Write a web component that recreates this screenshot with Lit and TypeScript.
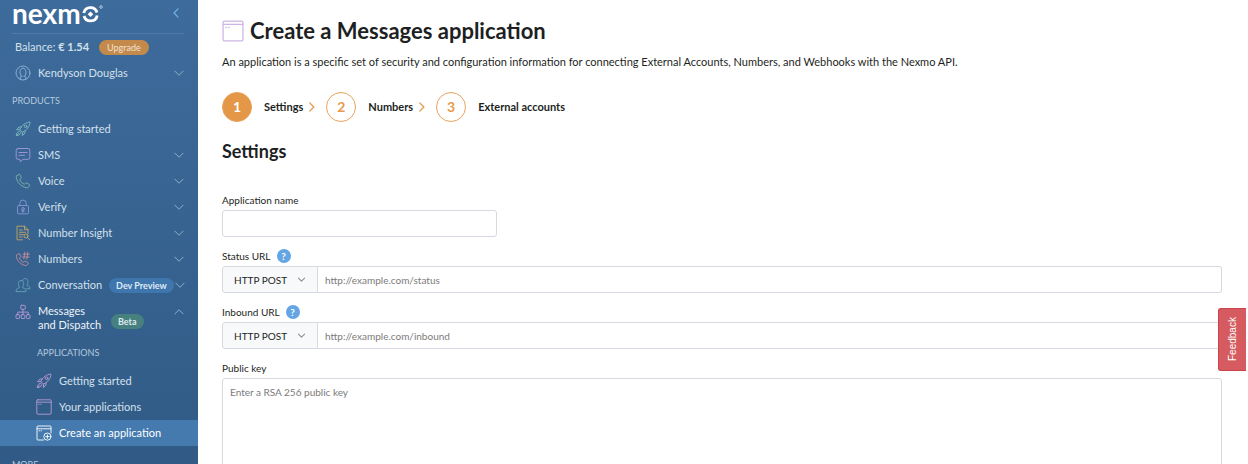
import { LitElement, html, css, svg, nothing } from "lit";
import { customElement, property } from "lit/decorators.js";
import { classMap } from "lit/directives/class-map.js";

const glyphs: Record<string, unknown> = {
  user: svg`<circle cx="8" cy="8" r="7" /><path d="M5.3 14.4v-2.2l1-1C4.6 9.300 4.300 3.200 8 3.200s3.400 6.100 1.700 8l1 1v2.200M6.300 11.200h.8M8.900 11.200h.8" />`,
  rocket: svg`<path d="M5 8.200C7 4 10.500 1.500 15 1c-.3 4.500-3 8-7.200 10z" /><circle cx="10.600" cy="5.300" r="1.300" /><path d="M6.300 6H3.800L1.600 8.800l3.400-.5M10 9.700v2.500l-2.800 2.400.6-3.600M4.300 10l1.800 1.800M3.800 10.600c-1.600.2-2.400 1.600-2.500 4 2.300-.1 3.800-.8 4-2.300M1.400 14.600l2-2" />`,
  sms: svg`<path d="M3 1.500h10A1.800 1.800 0 0 1 14.800 3.300v7.200A1.800 1.800 0 0 1 13 12.300H8l-2.600 2.400-.6-2.400H3A1.800 1.800 0 0 1 1.200 10.500V3.300A1.800 1.800 0 0 1 3 1.500zM4 5.500h8M4 8.300h5.500" />`,
  phone: svg`<path d="M1.800 2.800 4 1.300c.5-.2.800 0 1 .3l1.300 3c.1.400 0 .7-.3.900l-1.200 1c.8 2.300 2.400 3.900 4.700 4.800l1.100-1.200c.3-.3.600-.3.900-.1l2.900 1.500c.4.200.5.600.2 1l-1.400 1.900c-.4.400-.9.500-1.500.4C6.200 13.700 2 9.500 1.300 4.400c-.1-.7 0-1.200.5-1.600z" />`,
  lock: svg`<rect x="2.500" y="6.500" width="11" height="8.300" rx="1" /><path d="M4.800 6.500V4.300a3.200 3.200 0 0 1 6.400 0v2.200M7.400 11l-.5 1.800h2.200L8.600 11" /><circle cx="8" cy="9.800" r="1.300" />`,
  doc: svg`<path d="M7.500 14.800H2V1.200h7.500l3.500 3.500v4M9.500 1.200v3.500H13M4.300 5h3M4.300 7.300h6M4.300 9.600h4M4.300 12h3" /><circle cx="11" cy="11" r="2" /><path d="m12.500 12.500 2.200 2.200" />`,
  numbers: svg`<path d="M1.800 4 3.600 2.600c.4-.2.700-.1.900.2l1.200 2.600c.1.400 0 .6-.3.800l-.9.700c.7 2.200 2 3.600 4.200 4.400l1-.9c.3-.3.500-.3.800-.1l2.500 1.300c.3.200.4.500.2.900l-1.200 1.600c-.4.400-.8.500-1.400.4C5.900 13.800 2 10 1.400 5.400c-.1-.6 0-1.100.4-1.400zM9.800 1.200 8.900 8M12.800 1.200 11.900 8M8 3.200h6.500M7.600 6h6.500" />`,
  people: svg`<path d="M1 14.200c0-2 .8-2.700 3.300-3.400v-1C2.700 7.500 3 3.500 6 3.500s3.300 4 1.700 6.300v1c2.500.7 3.300 1.400 3.300 3.400zM7.600 3.600c.5-1.600 1.500-2 2.700-2 3 0 3.300 3.700 1.800 6v1c2.200.6 3 1.500 3 3.200h-4" />`,
  tree: svg`<rect x="5.800" y="1.300" width="4.400" height="4" rx=".6" /><path d="M8 5.300v5.200M2.800 10.500V8.100h10.400v2.400" /><rect x="1" y="10.700" width="3.600" height="3.800" rx=".8" /><rect x="6.200" y="10.700" width="3.600" height="3.800" rx=".8" /><rect x="11.400" y="10.700" width="3.600" height="3.800" rx=".8" />`,
  app: svg`<rect x=".8" y=".8" width="14.400" height="14.400" rx="1" /><path d="M.8 3.200h14.400M2.700 5.300h.5M4.800 5.300h.5" />`,
  create: svg`<path d="M7.500 15H2a1 1 0 0 1-1-1V2a1 1 0 0 1 1-1h12a1 1 0 0 1 1 1v6M1 3.800h14M3 5.800h.5M5 5.800h.5" /><circle cx="11.400" cy="11.600" r="3.600" /><path d="M11.400 9.800v3.600M9.600 11.600h3.600" />`,
  down: svg`<path d="M2.500 5.500 8 11l5.500-5.500" />`,
  up: svg`<path d="M2.500 10.500 8 5l5.500 5.500" />`,
  left: svg`<path d="M10 3.800 6 8l4 4.200" />`,
  right: svg`<path d="m5 2.500 5.500 5.500L5 13.500" />`,
};

@customElement("line-icon")
class LineIcon extends LitElement {
  @property() name = "app";

  static styles = css`
    :host {
      display: block;
      flex: none;
      width: 16px;
      height: 16px;
    }
    .glyph {
      display: block;
      width: 100%;
      height: 100%;
      fill: none;
      stroke: currentColor;
      stroke-width: var(--stroke, 0.9);
      stroke-linecap: round;
      stroke-linejoin: round;
    }
  `;

  render() {
    return html`<svg class="glyph" viewBox="0 0 16 16" aria-hidden="true">${glyphs[this.name]}</svg>`;
  }
}

interface NavItem {
  label: string;
  icon: string;
  tone: string;
  badge?: string;
  badgeTone?: string;
  toggle?: string;
  active?: boolean;
  tall?: boolean;
}

const products: NavItem[] = [
  { label: "Getting started", icon: "rocket", tone: "mint" },
  { label: "SMS", icon: "sms", tone: "violet", toggle: "down" },
  { label: "Voice", icon: "phone", tone: "green", toggle: "down" },
  { label: "Verify", icon: "lock", tone: "indigo", toggle: "down" },
  { label: "Number Insight", icon: "doc", tone: "gold", toggle: "down" },
  { label: "Numbers", icon: "numbers", tone: "rose", toggle: "down" },
  { label: "Conversation", icon: "people", tone: "teal", badge: "Dev Preview", badgeTone: "blue", toggle: "down" },
  { label: "Messages and Dispatch", icon: "tree", tone: "orchid", badge: "Beta", badgeTone: "sea", toggle: "up", tall: true },
];

const applications: NavItem[] = [
  { label: "Getting started", icon: "rocket", tone: "orchid" },
  { label: "Your applications", icon: "app", tone: "orchid" },
  { label: "Create an application", icon: "create", tone: "white", active: true },
];

@customElement("side-nav")
class SideNav extends LitElement {
  static styles = css`
    :host {
      display: block;
      box-sizing: border-box;
      flex: none;
      width: 198px;
      overflow: hidden;
      color: #d3e0ec;
      font-size: 11px;
      line-height: 14px;
      background: linear-gradient(#3d6b9b, #315b86);
    }
    .top {
      display: flex;
      align-items: center;
      justify-content: space-between;
      height: 34px;
      box-sizing: border-box;
      margin: 0 14px 0 12px;
      padding-bottom: 8px;
      border-bottom: 1px solid #4c7ba6;
    }
    .logo {
      display: flex;
      align-items: center;
      color: #fff;
      font-size: 28px;
      line-height: 24px;
      font-weight: 700;
      text-decoration: none;
    }
    .ring {
      width: 22px;
      height: 24px;
    }
    button {
      font: inherit;
      color: inherit;
      background: none;
      border: 0;
      padding: 0;
    }
    .collapse {
      color: #6fb2e8;
      --stroke: 1.2;
    }
    .balance {
      display: flex;
      align-items: center;
      gap: 10px;
      height: 26px;
      padding: 0 15px;
    }
    .pill {
      border-radius: 8px;
      padding: 0 7px;
      font-size: 9px;
      line-height: 15px;
      font-weight: 700;
      color: #dfeaf3;
      white-space: nowrap;
      text-decoration: none;
    }
    .amber {
      background: #c48a4b;
      color: #f3e3d2;
      padding: 0 8px;
      font-weight: 400;
    }
    .blue {
      background: #4076ae;
    }
    .sea {
      background: #47817f;
    }
    ul {
      list-style: none;
      margin: 0;
      padding: 0;
    }
    .row {
      display: flex;
      align-items: center;
      box-sizing: border-box;
      min-height: 26px;
      padding: 0 13px 0 15px;
      color: inherit;
      text-decoration: none;
    }
    .row .text {
      margin-left: 7px;
    }
    .row .pill {
      margin-left: 7px;
    }
    .row .toggle {
      width: 12px;
      margin-left: auto;
      color: #8fb0cd;
      --stroke: 1.3;
    }
    .tall {
      align-items: flex-start;
      padding-top: 6px;
      padding-bottom: 2px;
      color: #eef4f9;
    }
    .tall .text {
      width: 66px;
    }
    .tall .pill {
      margin-top: 10px;
    }
    .heading {
      margin: 0;
      padding: 0 12px;
      font-size: 9px;
      line-height: 30px;
      font-weight: 400;
      color: #b5cade;
    }
    .nested .heading {
      padding-left: 37px;
      padding-top: 4px;
    }
    .nested .row {
      padding-left: 36px;
    }
    .more {
      padding-top: 4px;
    }
    .active {
      background: #457aaf;
      color: #fff;
    }
    .mint { color: #7fb9bf; }
    .violet { color: #a39bd6; }
    .green { color: #79b5a8; }
    .indigo { color: #8896d4; }
    .gold { color: #c2a566; }
    .rose { color: #c58d9c; }
    .teal { color: #62a3b5; }
    .orchid { color: #b59bd2; }
    .white { color: #fff; }
    .soft { color: #8fb6d8; }
  `;

  private row(item: NavItem) {
    return html`<li>
      <a class=${classMap({ row: true, active: !!item.active, tall: !!item.tall })} href="#">
        <line-icon class=${item.tone} name=${item.icon}></line-icon>
        <span class="text">${item.label}</span>
        ${item.badge ? html`<span class="pill ${item.badgeTone}">${item.badge}</span>` : nothing}
        ${item.toggle ? html`<line-icon class="toggle" name=${item.toggle}></line-icon>` : nothing}
      </a>
    </li>`;
  }

  render() {
    return html`
      <div class="top">
        <a class="logo" href="#">nexm<svg class="ring" viewBox="0 0 22 24" aria-hidden="true">
            <g fill="none" stroke="#fff">
              <path d="M2.800 12.100a6.800 6.800 0 0 1 13.200-.6M16.200 14.400a6.800 6.800 0 0 1-13.200.6" stroke-width="2.800" />
              <circle cx="20" cy="6" r="1.300" stroke-width=".6" />
            </g>
            <path d="m9.500 10.500 2.800 2.800-2.800 2.800-2.800-2.800z" fill="#fff" />
          </svg></a>
        <button class="collapse" aria-label="Collapse menu"><line-icon name="left"></line-icon></button>
      </div>
      <div class="balance">
        <span>Balance: <b>€ 1.54</b></span>
        <a class="pill amber" href="#">Upgrade</a>
      </div>
      <a class="row" href="#">
        <line-icon class="soft" name="user"></line-icon>
        <span class="text">Kendyson Douglas</span>
        <line-icon class="toggle" name="down"></line-icon>
      </a>
      <h3 class="heading">PRODUCTS</h3>
      <ul>${products.map((p) => this.row(p))}</ul>
      <div class="nested">
        <h3 class="heading">APPLICATIONS</h3>
        <ul>${applications.map((a) => this.row(a))}</ul>
      </div>
      <h3 class="heading more">MORE</h3>
    `;
  }
}

@customElement("app-root")
class AppRoot extends LitElement {
  static styles = css`
    :host {
      display: flex;
      position: relative;
      height: 100vh;
      overflow: hidden;
      font-family: Lato, "Liberation Sans", sans-serif;
      color: #1d1f23;
      background: #fff;
    }
    main {
      flex: 1;
      min-width: 0;
      padding: 16px 26px 0 24px;
      font-size: 11px;
      line-height: 14px;
    }
    .title {
      display: flex;
      align-items: center;
      gap: 6px;
    }
    .title line-icon {
      width: 22px;
      height: 22px;
      color: #cdb5e4;
    }
    h1 {
      margin: 0;
      font-size: 22px;
      line-height: 30px;
      font-weight: 700;
    }
    .intro {
      margin: 9px 0 23px;
    }
    .steps {
      display: flex;
      align-items: center;
      list-style: none;
      margin: 0;
      padding: 0;
      font-weight: 700;
    }
    .step {
      display: flex;
      align-items: center;
    }
    .num {
      display: grid;
      place-items: center;
      box-sizing: border-box;
      width: 30px;
      height: 30px;
      margin-right: 12px;
      border: 1px solid #e8a25c;
      border-radius: 50%;
      font-size: 14px;
      color: #e59a4d;
    }
    .current {
      background: #e59748;
      color: #fff;
    }
    .step line-icon {
      width: 12px;
      height: 12px;
      margin: 0 8px 0 3px;
      color: #e59a4d;
      --stroke: 1.8;
    }
    h2 {
      margin: 18px 0 31px;
      font-size: 18px;
      line-height: 22px;
      font-weight: 700;
    }
    .field {
      margin-bottom: 12px;
      font-size: 10px;
    }
    .caption {
      display: flex;
      align-items: center;
      gap: 6px;
      height: 14px;
      margin-bottom: 3px;
    }
    .help {
      display: grid;
      place-items: center;
      width: 14px;
      height: 14px;
      padding: 0;
      border: 0;
      border-radius: 50%;
      background: #64a5e4;
      color: #fff;
      font: 700 10px/14px Lato, sans-serif;
    }
    input,
    textarea,
    select {
      display: block;
      box-sizing: border-box;
      margin: 0;
      font: inherit;
      color: inherit;
      background: #fff;
      border: 1px solid #d5dae0;
      border-radius: 3px;
      outline: none;
    }
    input {
      width: 100%;
      height: 27px;
      padding: 0 7px;
    }
    ::placeholder {
      color: #7b7b7b;
      opacity: 1;
    }
    .short {
      width: 275px;
      max-width: 100%;
    }
    .group {
      display: flex;
    }
    .group input {
      flex: 1;
      min-width: 0;
      border-left: 0;
      border-radius: 0 3px 3px 0;
    }
    .method {
      display: grid;
      align-items: center;
      flex: none;
      width: 96px;
    }
    .method > * {
      grid-area: 1 / 1;
    }
    select {
      appearance: none;
      width: 100%;
      height: 27px;
      padding: 0 11px;
      background: #f7f9fb;
      border-radius: 3px 0 0 3px;
    }
    .method line-icon {
      justify-self: end;
      width: 9px;
      height: 9px;
      margin-right: 12px;
      color: #8a8f96;
      pointer-events: none;
      --stroke: 1.8;
    }
    textarea {
      width: 100%;
      height: 150px;
      padding: 6px 7px;
      resize: none;
    }
    .feedback {
      position: absolute;
      right: 2px;
      top: 308px;
      width: 28px;
      height: 63px;
      padding: 0;
      writing-mode: vertical-rl;
      transform: rotate(180deg);
      border: 1px solid #cf4247;
      border-left: 0;
      border-radius: 0 3px 3px 0;
      background: #d55b60;
      color: #fff;
      font: 10px/27px "Liberation Sans", sans-serif;
    }
  `;

  private urlField(id: string, label: string, hint: string) {
    return html`<div class="field">
      <div class="caption">
        <label for=${id}>${label}</label>
        <button class="help" aria-label="Help">?</button>
      </div>
      <div class="group">
        <div class="method">
          <select aria-label="HTTP method">
            <option>HTTP POST</option>
            <option>HTTP GET</option>
          </select>
          <line-icon name="down"></line-icon>
        </div>
        <input id=${id} type="url" placeholder=${hint} />
      </div>
    </div>`;
  }

  render() {
    const steps = ["Settings", "Numbers", "External accounts"];
    return html`
      <side-nav></side-nav>
      <main>
        <div class="title">
          <line-icon name="app"></line-icon>
          <h1>Create a Messages application</h1>
        </div>
        <p class="intro">
          An application is a specific set of security and configuration information for connecting External Accounts, Numbers, and Webhooks with the Nexmo API.
        </p>
        <ol class="steps">
          ${steps.map(
            (s, i) => html`<li class="step">
              <span class=${classMap({ num: true, current: i === 0 })}>${i + 1}</span>${s}
              ${i < steps.length - 1 ? html`<line-icon name="right"></line-icon>` : nothing}
            </li>`
          )}
        </ol>
        <h2>Settings</h2>
        <div class="field">
          <div class="caption"><label for="app-name">Application name</label></div>
          <input class="short" id="app-name" type="text" />
        </div>
        ${this.urlField("status-url", "Status URL", "http://example.com/status")}
        ${this.urlField("inbound-url", "Inbound URL", "http://example.com/inbound")}
        <div class="field">
          <div class="caption"><label for="public-key">Public key</label></div>
          <textarea id="public-key" placeholder="Enter a RSA 256 public key"></textarea>
        </div>
      </main>
      <button class="feedback">Feedback</button>
    `;
  }
}
